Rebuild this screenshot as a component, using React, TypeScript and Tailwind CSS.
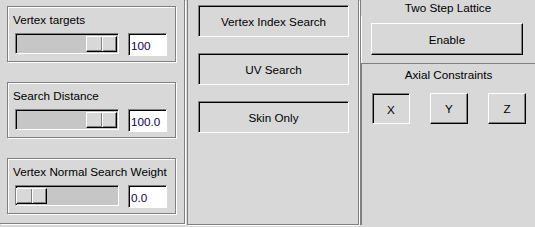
const raised =
  'border border-t-white border-l-white border-b-black border-r-black shadow-[inset_-1px_-1px_0_#808080]';
const sunken =
  'border border-t-[#808080] border-l-[#808080] border-b-white border-r-white shadow-[inset_1px_1px_0_#000]';

const SliderGroup = ({
  label,
  value,
  thumbAtEnd,
}: {
  label: string;
  value: string;
  thumbAtEnd: boolean;
}) => (
  <div className="w-[169px] h-[56px] border border-[#808080] shadow-[inset_1px_1px_0_#fff,1px_1px_0_#fff] pl-[5px] pt-[6px]">
    <div className="leading-[13px] whitespace-nowrap">{label}</div>
    <div className="flex items-start pl-[2px] mt-[7px] gap-[9px]">
      {/* track */}
      <div
        className={`w-[104px] h-[21px] bg-[#c6c6c6] ${sunken} flex items-center ${
          thumbAtEnd ? 'justify-end pr-[1px]' : 'justify-start'
        }`}
      >
        <div className={`w-[31px] h-[16px] bg-[#d8d8d8] ${raised} flex justify-center`}>
          <div className="w-px h-full bg-[#808080]" />
          <div className="w-px h-full bg-white" />
        </div>
      </div>
      {/* field */}
      <div className={`w-[39px] h-[23px] bg-white ${sunken} flex items-center pl-[2px] pt-[2px] text-[#140050]`}>
        {value}
      </div>
    </div>
  </div>
);

const ToggleButton = ({ label }: { label: string }) => (
  <div className={`w-[151px] h-[32px] ${sunken} flex items-center justify-center pt-[2px]`}>{label}</div>
);

export default function App() {
  return (
    <div className="w-[535px] h-[227px] bg-[#d8d8d8] flex font-['Liberation_Sans',Arial,sans-serif] text-[11.7px] text-black overflow-hidden">
      {/* left panel */}
      <div className="w-[185px] h-[224px] shrink-0 border-r border-b border-[#808080] shadow-[1px_1px_0_#fff] pl-[7px] pt-[6px] flex flex-col gap-[20px]">
        <SliderGroup label="Vertex targets" value="100" thumbAtEnd />
        <SliderGroup label="Search Distance" value="100.0" thumbAtEnd />
        <SliderGroup label="Vertex Normal Search Weight" value="0.0" thumbAtEnd={false} />
      </div>

      {/* middle panel */}
      <div className="w-[172px] h-[225px] shrink-0 ml-[2px] border-l border-r border-b border-[#808080] shadow-[1px_1px_0_#fff] pl-[10px] pt-[5px] flex flex-col gap-[16px]">
        <ToggleButton label="Vertex Index Search" />
        <ToggleButton label="UV Search" />
        <ToggleButton label="Skin Only" />
      </div>

      {/* right panel */}
      <div className="flex-1 h-[225px] ml-[1px] border-l border-[#808080] flex flex-col">
        <div className="h-[16px] pt-[1px] text-center leading-[13px]">Two Step Lattice</div>
        <div className="h-[47px] border-l border-white pl-[9px] pt-[7px]">
          <div className={`w-[152px] h-[32px] ${raised} flex items-center justify-center pt-[1px]`}>Enable</div>
        </div>
        <div className="flex-1 border-t border-l border-[#808080] pt-[4px]">
          <div className="text-center leading-[13px]">Axial Constraints</div>
          <div className="flex gap-[20px] pl-[10px] mt-[12px]">
            <div className={`w-[38px] h-[31px] ${sunken} flex items-center justify-center pt-[2px]`}>X</div>
            <div className={`w-[38px] h-[31px] ${raised} flex items-center justify-center`}>Y</div>
            <div className={`w-[38px] h-[31px] ${raised} flex items-center justify-center`}>Z</div>
          </div>
        </div>
      </div>
    </div>
  );
}
